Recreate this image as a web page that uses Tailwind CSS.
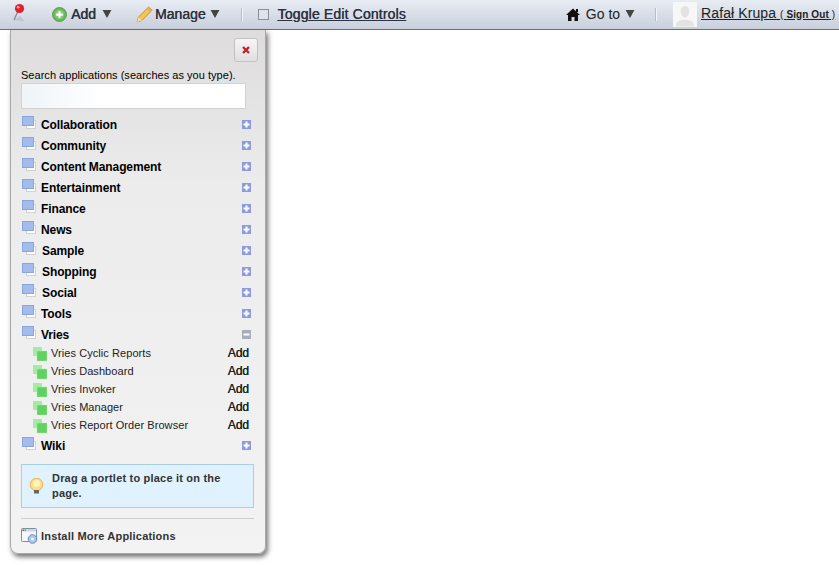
<!DOCTYPE html>
<html>
<head>
<meta charset="utf-8">
<script src="https://cdn.jsdelivr.net/npm/@tailwindcss/browser@4"></script>
</head>
<body class="bg-white font-['Liberation_Sans',Arial,sans-serif] text-[#111] overflow-hidden">
<div class="relative h-[566px] w-[839px] overflow-hidden">
  <!-- Dockbar -->
  <header class="flex h-[30px] items-center whitespace-nowrap border-b border-[#6b6f75] bg-gradient-to-b from-[#e8ecf3] to-[#c9d0dc] text-[14px] font-normal text-[#2c3240]">
    <svg class="ml-[11px] h-[24px] w-[20px] shrink-0" viewBox="0 0 20 24"><path d="M3 17 L14 18.500 L9 13Z" fill="#bcc0c6" opacity=".8"/><path d="M7 8 L3 17" stroke="#8d8d8d" stroke-width="1.400"/><circle cx="8.500" cy="5.500" r="4.600" fill="#e2202c"/><circle cx="7.200" cy="4.200" r="1.400" fill="#f8a0a0"/></svg>
    <svg class="ml-[21px] h-[15px] w-[15px] shrink-0" viewBox="0 0 16 16"><circle cx="8" cy="8" r="7.400" fill="#6cb85c" stroke="#4d9a45"/><circle cx="8" cy="8" r="5" fill="#82cc72"/><path d="M8 4.500v7M4.500 8h7" stroke="#fff" stroke-width="2.400"/></svg>
    <span class="ml-[4px] [text-shadow:0.4px_0_0_#2c3240]">Add</span>
    <svg class="ml-[6px] mb-[2px] h-[8px] w-[10px] shrink-0" viewBox="0 0 10 9"><path d="M0 0h10L5 9z" fill="#444"/></svg>
    <svg class="ml-[24px] h-[17px] w-[17px] shrink-0" viewBox="0 0 16 16"><path d="M12 .8 L15.200 4 L5.500 13.700 L1 15 L2.300 10.500Z" fill="#f3c552" stroke="#c98a2c" stroke-width=".9"/><path d="M12 .8 L15.200 4 L13.400 5.800 L10.200 2.600Z" fill="#e9a876"/><path d="M2.300 10.500 L1 15 L5.500 13.700Z" fill="#f5dcb0"/></svg>
    <span class="ml-[2px] [text-shadow:0.4px_0_0_#2c3240]">Manage</span>
    <svg class="ml-[4px] mb-[2px] h-[8px] w-[10px] shrink-0" viewBox="0 0 10 9"><path d="M0 0h10L5 9z" fill="#444"/></svg>
    <div class="ml-[22px] h-[13px] w-px shrink-0 bg-[#f2f4f7] shadow-[-1px_0_0_#b8bec9]"></div>
    <div class="ml-[15px] h-[11px] w-[11px] shrink-0 border border-[#8a8f98] bg-[#dfe3ea]"></div>
    <a class="ml-[9px] tracking-[0.15px] underline [text-shadow:0.4px_0_0_#2c3240]">Toggle Edit Controls</a>
    <svg class="ml-[160px] h-[13px] w-[14px] shrink-0" viewBox="0 0 14 13"><path d="M7 .5 L14 7 H12 V13 H8.500 V9 H5.500 V13 H2 V7 H0Z" fill="#111"/><rect x="10" y="1" width="2" height="3" fill="#111"/></svg>
    <span class="ml-[6px] text-[#222]">Go to</span>
    <svg class="ml-[5px] mb-[2px] h-[8px] w-[10px] shrink-0" viewBox="0 0 10 9"><path d="M0 0h10L5 9z" fill="#444"/></svg>
    <div class="ml-[21px] h-[13px] w-px shrink-0 bg-[#f2f4f7] shadow-[-1px_0_0_#b8bec9]"></div>
    <div class="ml-[16px] mt-[-1px] h-[25px] w-[24px] shrink-0 overflow-hidden bg-[#f7f7f7]"><svg class="h-full w-full" viewBox="0 0 25 25"><ellipse cx="12.500" cy="9.500" rx="4.500" ry="6" fill="#e3e3e3"/><path d="M3 25c0-6 5-7 9.500-7s9.500 1 9.500 7z" fill="#e3e3e3"/></svg></div>
    <a class="ml-[4px] mb-[3px] tracking-[0.1px] text-[#222] underline">Rafał Krupa <span class="text-[10px] tracking-[0.1px]">( <span class="font-bold">Sign Out</span> )</span></a>
  </header>

  <!-- Add application panel -->
  <aside class="absolute left-[10px] top-[30px] flex h-[524px] w-[256px] flex-col rounded-b-[8px] border-x border-b border-[#a9a9a9] bg-gradient-to-b from-[#dedcdc] via-[#ececec] via-[30%] to-[#f3f3f3] px-[10px] shadow-[2px_3px_5px_rgba(0,0,0,0.55)]">
    <div class="-mr-[3px] flex justify-end pt-[8px]">
      <button class="flex h-[24px] w-[24px] items-center justify-center rounded-[3px] border border-[#c2c2c2] bg-gradient-to-b from-[#f6f6f6] to-[#dfdfdf]">
        <svg class="h-[8px] w-[8px]" viewBox="0 0 8 8"><path d="M1 1l6 6M7 1L1 7" stroke="#c0242a" stroke-width="2.400"/></svg>
      </button>
    </div>
    <label class="mt-[6px] whitespace-nowrap text-[11px] leading-[14px] tracking-[0.03px] text-black">Search applications (searches as you type).</label>
    <input class="mt-[1px] h-[26px] w-[225px] border border-[#d2d2d2] bg-gradient-to-r from-[#eef4f8] via-white via-[35%] to-white" />
    <ul class="mt-[5px] flex w-[232px] flex-col text-[12px] font-bold tracking-[-0.1px] text-black">
      <li class="flex h-[21px] items-center"><svg class="ml-[1px] -mt-[3px] h-[14px] w-[14px] shrink-0" viewBox="0 0 14 14"><rect x="4.500" y="4.500" width="9" height="8" fill="#fff" stroke="#d2d2d2"/><rect x=".5" y=".5" width="11" height="9" fill="#a3bcec" stroke="#8aa6de"/></svg><span class="ml-[5px] flex-1">Collaboration</span><svg class="mr-[2px] h-[9px] w-[9px]" viewBox="0 0 9 9"><rect width="9" height="9" fill="#8d9bdc"/><path d="M4.500 1.500v6M1.500 4.500h6" stroke="#fff" stroke-width="2"/></svg></li>
      <li class="flex h-[21px] items-center"><svg class="ml-[1px] -mt-[3px] h-[14px] w-[14px] shrink-0" viewBox="0 0 14 14"><rect x="4.500" y="4.500" width="9" height="8" fill="#fff" stroke="#d2d2d2"/><rect x=".5" y=".5" width="11" height="9" fill="#a3bcec" stroke="#8aa6de"/></svg><span class="ml-[5px] flex-1">Community</span><svg class="mr-[2px] h-[9px] w-[9px]" viewBox="0 0 9 9"><rect width="9" height="9" fill="#8d9bdc"/><path d="M4.500 1.500v6M1.500 4.500h6" stroke="#fff" stroke-width="2"/></svg></li>
      <li class="flex h-[21px] items-center"><svg class="ml-[1px] -mt-[3px] h-[14px] w-[14px] shrink-0" viewBox="0 0 14 14"><rect x="4.500" y="4.500" width="9" height="8" fill="#fff" stroke="#d2d2d2"/><rect x=".5" y=".5" width="11" height="9" fill="#a3bcec" stroke="#8aa6de"/></svg><span class="ml-[5px] flex-1">Content Management</span><svg class="mr-[2px] h-[9px] w-[9px]" viewBox="0 0 9 9"><rect width="9" height="9" fill="#8d9bdc"/><path d="M4.500 1.500v6M1.500 4.500h6" stroke="#fff" stroke-width="2"/></svg></li>
      <li class="flex h-[21px] items-center"><svg class="ml-[1px] -mt-[3px] h-[14px] w-[14px] shrink-0" viewBox="0 0 14 14"><rect x="4.500" y="4.500" width="9" height="8" fill="#fff" stroke="#d2d2d2"/><rect x=".5" y=".5" width="11" height="9" fill="#a3bcec" stroke="#8aa6de"/></svg><span class="ml-[5px] flex-1">Entertainment</span><svg class="mr-[2px] h-[9px] w-[9px]" viewBox="0 0 9 9"><rect width="9" height="9" fill="#8d9bdc"/><path d="M4.500 1.500v6M1.500 4.500h6" stroke="#fff" stroke-width="2"/></svg></li>
      <li class="flex h-[21px] items-center"><svg class="ml-[1px] -mt-[3px] h-[14px] w-[14px] shrink-0" viewBox="0 0 14 14"><rect x="4.500" y="4.500" width="9" height="8" fill="#fff" stroke="#d2d2d2"/><rect x=".5" y=".5" width="11" height="9" fill="#a3bcec" stroke="#8aa6de"/></svg><span class="ml-[5px] flex-1">Finance</span><svg class="mr-[2px] h-[9px] w-[9px]" viewBox="0 0 9 9"><rect width="9" height="9" fill="#8d9bdc"/><path d="M4.500 1.500v6M1.500 4.500h6" stroke="#fff" stroke-width="2"/></svg></li>
      <li class="flex h-[21px] items-center"><svg class="ml-[1px] -mt-[3px] h-[14px] w-[14px] shrink-0" viewBox="0 0 14 14"><rect x="4.500" y="4.500" width="9" height="8" fill="#fff" stroke="#d2d2d2"/><rect x=".5" y=".5" width="11" height="9" fill="#a3bcec" stroke="#8aa6de"/></svg><span class="ml-[5px] flex-1">News</span><svg class="mr-[2px] h-[9px] w-[9px]" viewBox="0 0 9 9"><rect width="9" height="9" fill="#8d9bdc"/><path d="M4.500 1.500v6M1.500 4.500h6" stroke="#fff" stroke-width="2"/></svg></li>
      <li class="flex h-[21px] items-center"><svg class="ml-[1px] -mt-[3px] h-[14px] w-[14px] shrink-0" viewBox="0 0 14 14"><rect x="4.500" y="4.500" width="9" height="8" fill="#fff" stroke="#d2d2d2"/><rect x=".5" y=".5" width="11" height="9" fill="#a3bcec" stroke="#8aa6de"/></svg><span class="ml-[6px] flex-1">Sample</span><svg class="mr-[2px] h-[9px] w-[9px]" viewBox="0 0 9 9"><rect width="9" height="9" fill="#8d9bdc"/><path d="M4.500 1.500v6M1.500 4.500h6" stroke="#fff" stroke-width="2"/></svg></li>
      <li class="flex h-[21px] items-center"><svg class="ml-[1px] -mt-[3px] h-[14px] w-[14px] shrink-0" viewBox="0 0 14 14"><rect x="4.500" y="4.500" width="9" height="8" fill="#fff" stroke="#d2d2d2"/><rect x=".5" y=".5" width="11" height="9" fill="#a3bcec" stroke="#8aa6de"/></svg><span class="ml-[6px] flex-1">Shopping</span><svg class="mr-[2px] h-[9px] w-[9px]" viewBox="0 0 9 9"><rect width="9" height="9" fill="#8d9bdc"/><path d="M4.500 1.500v6M1.500 4.500h6" stroke="#fff" stroke-width="2"/></svg></li>
      <li class="flex h-[21px] items-center"><svg class="ml-[1px] -mt-[3px] h-[14px] w-[14px] shrink-0" viewBox="0 0 14 14"><rect x="4.500" y="4.500" width="9" height="8" fill="#fff" stroke="#d2d2d2"/><rect x=".5" y=".5" width="11" height="9" fill="#a3bcec" stroke="#8aa6de"/></svg><span class="ml-[6px] flex-1">Social</span><svg class="mr-[2px] h-[9px] w-[9px]" viewBox="0 0 9 9"><rect width="9" height="9" fill="#8d9bdc"/><path d="M4.500 1.500v6M1.500 4.500h6" stroke="#fff" stroke-width="2"/></svg></li>
      <li class="flex h-[21px] items-center"><svg class="ml-[1px] -mt-[3px] h-[14px] w-[14px] shrink-0" viewBox="0 0 14 14"><rect x="4.500" y="4.500" width="9" height="8" fill="#fff" stroke="#d2d2d2"/><rect x=".5" y=".5" width="11" height="9" fill="#a3bcec" stroke="#8aa6de"/></svg><span class="ml-[5px] flex-1">Tools</span><svg class="mr-[2px] h-[9px] w-[9px]" viewBox="0 0 9 9"><rect width="9" height="9" fill="#8d9bdc"/><path d="M4.500 1.500v6M1.500 4.500h6" stroke="#fff" stroke-width="2"/></svg></li>
      <li class="flex h-[21px] items-center"><svg class="ml-[1px] -mt-[3px] h-[14px] w-[14px] shrink-0" viewBox="0 0 14 14"><rect x="4.500" y="4.500" width="9" height="8" fill="#fff" stroke="#d2d2d2"/><rect x=".5" y=".5" width="11" height="9" fill="#a3bcec" stroke="#8aa6de"/></svg><span class="ml-[5px] flex-1">Vries</span><svg class="mr-[2px] h-[9px] w-[9px]" viewBox="0 0 9 9"><rect width="9" height="9" fill="#a9adba"/><path d="M1.500 4.500h6" stroke="#fff" stroke-width="2"/></svg></li>
      <li class="flex h-[18px] items-center text-[11px] font-normal tracking-[0.07px]"><svg class="ml-[12px] h-[14px] w-[14px] shrink-0" viewBox="0 0 14 14"><rect width="9" height="9" fill="#a4eba4"/><rect x="4" y="4" width="10" height="10" fill="#62d162" stroke="#a4eba4" stroke-width=".5"/></svg><span class="ml-[4px] mb-[2px] flex-1 text-[#222]">Vries Cyclic Reports</span><span class="mr-[4px] mb-[2px] text-[12px] font-normal tracking-normal text-[#222] [text-shadow:0.3px_0_0_#222]">Add</span></li>
      <li class="flex h-[18px] items-center text-[11px] font-normal tracking-[0.07px]"><svg class="ml-[12px] h-[14px] w-[14px] shrink-0" viewBox="0 0 14 14"><rect width="9" height="9" fill="#a4eba4"/><rect x="4" y="4" width="10" height="10" fill="#62d162" stroke="#a4eba4" stroke-width=".5"/></svg><span class="ml-[4px] mb-[2px] flex-1 text-[#222]">Vries Dashboard</span><span class="mr-[4px] mb-[2px] text-[12px] font-normal tracking-normal text-[#222] [text-shadow:0.3px_0_0_#222]">Add</span></li>
      <li class="flex h-[18px] items-center text-[11px] font-normal tracking-[0.07px]"><svg class="ml-[12px] h-[14px] w-[14px] shrink-0" viewBox="0 0 14 14"><rect width="9" height="9" fill="#a4eba4"/><rect x="4" y="4" width="10" height="10" fill="#62d162" stroke="#a4eba4" stroke-width=".5"/></svg><span class="ml-[4px] mb-[2px] flex-1 text-[#222]">Vries Invoker</span><span class="mr-[4px] mb-[2px] text-[12px] font-normal tracking-normal text-[#222] [text-shadow:0.3px_0_0_#222]">Add</span></li>
      <li class="flex h-[18px] items-center text-[11px] font-normal tracking-[0.07px]"><svg class="ml-[12px] h-[14px] w-[14px] shrink-0" viewBox="0 0 14 14"><rect width="9" height="9" fill="#a4eba4"/><rect x="4" y="4" width="10" height="10" fill="#62d162" stroke="#a4eba4" stroke-width=".5"/></svg><span class="ml-[4px] mb-[2px] flex-1 text-[#222]">Vries Manager</span><span class="mr-[4px] mb-[2px] text-[12px] font-normal tracking-normal text-[#222] [text-shadow:0.3px_0_0_#222]">Add</span></li>
      <li class="flex h-[18px] items-center text-[11px] font-normal tracking-[0.07px]"><svg class="ml-[12px] h-[14px] w-[14px] shrink-0" viewBox="0 0 14 14"><rect width="9" height="9" fill="#a4eba4"/><rect x="4" y="4" width="10" height="10" fill="#62d162" stroke="#a4eba4" stroke-width=".5"/></svg><span class="ml-[4px] mb-[2px] flex-1 text-[#222]">Vries Report Order Browser</span><span class="mr-[4px] mb-[2px] text-[12px] font-normal tracking-normal text-[#222] [text-shadow:0.3px_0_0_#222]">Add</span></li>
      <li class="flex h-[21px] items-center"><svg class="ml-[1px] -mt-[3px] h-[14px] w-[14px] shrink-0" viewBox="0 0 14 14"><rect x="4.500" y="4.500" width="9" height="8" fill="#fff" stroke="#d2d2d2"/><rect x=".5" y=".5" width="11" height="9" fill="#a3bcec" stroke="#8aa6de"/></svg><span class="ml-[5px] flex-1">Wiki</span><svg class="mr-[2px] h-[9px] w-[9px]" viewBox="0 0 9 9"><rect width="9" height="9" fill="#8d9bdc"/><path d="M4.500 1.500v6M1.500 4.500h6" stroke="#fff" stroke-width="2"/></svg></li>
    </ul>
    <div class="mt-[8px] flex h-[44px] w-[233px] items-center border border-[#a9cfe4] bg-[#dff2fd] text-[11px] font-bold leading-[15px] tracking-[0.2px] text-[#333]">
      <svg class="ml-[7px] h-[16px] w-[15px] shrink-0" viewBox="0 0 15 16"><circle cx="7.500" cy="6.500" r="6.300" fill="#ffdf85" stroke="#e2a93b" stroke-width=".8"/><circle cx="7.500" cy="5.500" r="3.500" fill="#fff3c4"/><rect x="5" y="12" width="5" height="3.500" fill="#666"/></svg>
      <span class="ml-[8px] w-[176px]">Drag a portlet to place it on the page.</span>
    </div>
    <div class="mt-[10px] h-px w-[233px] bg-[#cccccc]"></div>
    <div class="mt-[9px] flex items-center text-[11px] font-bold tracking-[0.2px] text-[#333]">
      <svg class="h-[16px] w-[17px] shrink-0" viewBox="0 0 17 16"><rect x=".5" y=".5" width="15" height="13" rx="1" fill="#f4f8fc" stroke="#7b8ea5"/><rect x="1" y="1" width="14" height="2.500" fill="#c8d6e6"/><rect x="1.500" y="1.500" width="1.500" height="1.500" fill="#d94a3a"/><rect x="3.500" y="1.500" width="1.500" height="1.500" fill="#6fb24e"/><circle cx="11.500" cy="11" r="4.300" fill="#a9c6ea" stroke="#6f8fbd"/><circle cx="11.500" cy="11" r="1.500" fill="#eef4fb"/></svg>
      <span class="ml-[3px]">Install More Applications</span>
    </div>
  </aside>
</div>
</body>
</html>
